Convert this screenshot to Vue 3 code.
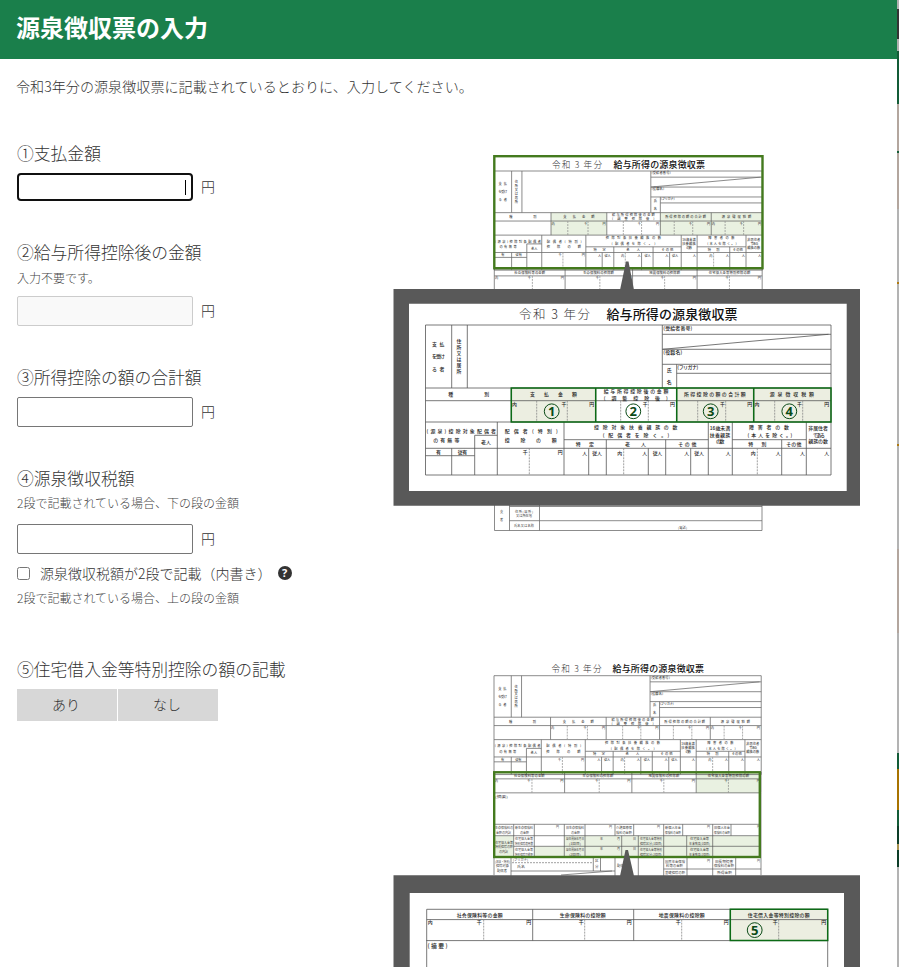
<script setup>
import { ref } from 'vue';

const income = ref('');
const deduction = ref('');
const tax = ref('');
const doubleEntry = ref(false);
const housing = ref('');

// upper half of the slip, solid rules: x1, y1, x2, y2
const slipLines = [
  [0, 0, 405.5, 0],
  [0, 63, 405.5, 63],
  [0, 75.7, 405.5, 75.7],
  [0, 97, 405.5, 97],
  [0, 123.3, 405.5, 123.3],
  [0, 150, 405.5, 150],
  [0, 130.7, 49.2, 130.7],
  [49.2, 110.3, 71.8, 110.3],
  [138.5, 114.7, 282.8, 114.7],
  [306.8, 114.7, 380.8, 114.7],
  [236.8, 9.3, 405.5, 9.3],
  [236.8, 24.3, 405.5, 24.3],
  [236.8, 39.3, 405.5, 39.3],
  [251.2, 48.3, 405.5, 48.3],
  [237, 24.3, 403, 9.3],
  [0, 0, 0, 150],
  [405.5, 0, 405.5, 150],
  [26.2, 0, 26.2, 63],
  [41.8, 0, 41.8, 63],
  [236.8, 0, 236.8, 63],
  [251.2, 39.3, 251.2, 63],
  [85.8, 63, 85.8, 97],
  [170.2, 63, 170.2, 97],
  [251.2, 63, 251.2, 97],
  [328.2, 63, 328.2, 97],
  [26.2, 123.3, 26.2, 150],
  [49.2, 110.3, 49.2, 150],
  [71.8, 97, 71.8, 150],
  [138.5, 97, 138.5, 150],
  [180.8, 114.7, 180.8, 150],
  [240.2, 114.7, 240.2, 150],
  [163.2, 123.3, 163.2, 150],
  [222.8, 123.3, 222.8, 150],
  [265.2, 123.3, 265.2, 150],
  [282.8, 97, 282.8, 150],
  [306.8, 97, 306.8, 150],
  [356.2, 114.7, 356.2, 150],
  [380.8, 97, 380.8, 150],
];

const slipDashes = [
  [111.2, 75.7, 97],
  [141.8, 75.7, 97],
  [195.2, 75.7, 97],
  [222.8, 75.7, 97],
  [272.2, 75.7, 97],
  [300.2, 75.7, 97],
  [349.2, 75.7, 97],
  [377.2, 75.7, 97],
  [103.8, 123.3, 150],
  [198.2, 123.3, 150],
  [331.8, 123.3, 150],
];

// text, x, baseline, width
const slipTexts = [
  ['支払', 6.5, 21, 12.5],
  ['を受け', 6.5, 33.2, 13],
  ['る者', 6.5, 45.5, 12.5],
  ['住', 31, 18, 4.5],
  ['所', 31, 24, 4.5],
  ['又', 31, 30, 4.5],
  ['は', 31, 36, 4.5],
  ['居', 31, 42.2, 4.5],
  ['所', 31, 48.2, 4.5],
  ['種', 22.8, 71.3, 4.5],
  ['別', 58.8, 71.3, 4.5],
  ['支払金額', 104.5, 71.3, 47],
  ['給与所得控除後の金額', 178.2, 68.4, 64.6],
  ['(調整控除後)', 178.2, 74.5, 64],
  ['所得控除の額の合計額', 258.5, 71.3, 61.7],
  ['源泉徴収税額', 344.2, 71.3, 44.3],
  ['内', 86.5, 81, 4.5],
  ['千', 136, 81, 4.5],
  ['円', 163.8, 81, 4.5],
  ['千', 217.2, 81, 4.5],
  ['円', 244.5, 81, 4.5],
  ['千', 294.5, 81, 4.5],
  ['円', 321.8, 81, 4.5],
  ['内', 329, 81, 4.5],
  ['千', 371.5, 81, 4.5],
  ['円', 398.8, 81, 4.5],
  ['(源泉)控除対象配偶者', 1, 108.3, 69.5],
  ['の有無等', 7.8, 116.9, 26],
  ['老人', 55.5, 119, 10],
  ['配偶者(特別)', 79.2, 108.3, 53],
  ['控除の額', 79.2, 116.9, 52],
  ['控除対象扶養親族の数', 168.5, 103.5, 83.5],
  ['(配偶者を除く。)', 177.2, 112.3, 66.6],
  ['特定', 150.2, 121, 18.3],
  ['老人', 199.5, 121, 21],
  ['その他', 252.8, 121, 18],
  ['有', 10.5, 129.3, 4.5],
  ['従有', 32.2, 129.3, 9.5],
  ['千', 97.2, 129, 4.5],
  ['円', 132.2, 129, 4.5],
  ['人', 156.8, 129.5, 4.5],
  ['従人', 166.8, 129.5, 9.5],
  ['内', 191.8, 129.5, 4.5],
  ['人', 216.8, 129.5, 4.5],
  ['従人', 227.2, 129.5, 9.5],
  ['人', 258.8, 129.5, 4.5],
  ['従人', 268.8, 129.5, 9.5],
  ['人', 300.2, 129.5, 4.5],
  ['内', 325.2, 129.5, 4.5],
  ['人', 350.2, 129.5, 4.5],
  ['人', 374.5, 129.5, 4.5],
  ['人', 398.8, 129.5, 4.5],
  ['16歳未満', 284.2, 105.3, 20.5],
  ['扶養親族', 284.2, 111.5, 20.5],
  ['の数', 290.5, 117.7, 8.5],
  ['障害者の数', 323.5, 103.5, 40],
  ['(本人を除く。)', 322, 112.3, 44.8],
  ['特別', 322.8, 121, 18],
  ['その他', 360.8, 121, 15],
  ['非居住者', 382.8, 105.3, 19.5],
  ['である', 387.5, 111.5, 12],
  ['親族の数', 382.8, 117.7, 19.5],
  ['(受給者番号)', 237.8, 4.9, 29],
  ['(役職名)', 237.8, 29.3, 19],
  ['(フリガナ)', 251.8, 44, 21],
  ['氏', 241.2, 46.5, 4.5],
  ['名', 241.2, 58.7, 4.5],
];

// insurance row
const insLines = [
  [0, 0, 401, 0],
  [0, 10.3, 401, 10.3],
  [0, 31.3, 401, 31.3],
  [0, 0, 0, 31.3],
  [106, 0, 106, 31.3],
  [207, 0, 207, 31.3],
  [303.6, 0, 303.6, 31.3],
  [401, 0, 401, 31.3],
];
const insDashes = [57, 158, 255, 352];
const insTexts = [
  ['社会保険料等の金額', 30, 7.4, 46],
  ['生命保険料の控除額', 133, 7.4, 46],
  ['地震保険料の控除額', 232, 7.4, 46],
  ['住宅借入金等特別控除の額', 321, 7.4, 62],
  ['内', 1, 14.9, 4.5],
  ['千', 50, 14.9, 4.5],
  ['円', 99.5, 14.9, 4.5],
  ['千', 152, 14.9, 4.5],
  ['円', 200, 14.9, 4.5],
  ['千', 249, 14.9, 4.5],
  ['円', 297, 14.9, 4.5],
  ['千', 346, 14.9, 4.5],
  ['円', 394.5, 14.9, 4.5],
];

const marks = [
  ['1', 158.7],
  ['2', 240.3],
  ['3', 317.7],
  ['4', 396.3],
];

// lower half of the second slip
const detailLines = [
  [101, 138, 101, 220],
  [368, 138, 368, 220],
  [101, 169.3, 368, 169.3],
  [101, 180.7, 368, 180.7],
  [120.7, 191.3, 368, 191.3],
  [101, 202.5, 368, 202.5],
  [120.7, 169.3, 120.7, 202],
  [141.3, 169.3, 141.3, 202],
  [171.3, 169.3, 171.3, 202],
  [192, 169.3, 192, 202],
  [222, 169.3, 222, 180.7],
  [240.7, 169.3, 240.7, 180.7],
  [270.7, 169.3, 270.7, 202],
  [289.7, 169.3, 289.7, 180.7],
  [319.7, 169.3, 319.7, 202],
  [338, 169.3, 338, 180.7],
  [228.7, 180.7, 228.7, 202],
  [245.3, 180.7, 245.3, 202],
  [293.7, 180.7, 293.7, 202],
  [118, 203, 118, 221],
  [118, 216, 222, 216],
  [168, 220, 219, 216],
  [200.3, 203, 200.3, 216],
  [207.5, 203, 207.5, 216],
  [222, 203, 222, 221],
  [245.3, 203, 245.3, 221],
  [270.7, 203, 270.7, 221],
  [294, 203, 294, 221],
  [319.7, 203, 319.7, 221],
  [342.7, 203, 342.7, 221],
  [270.7, 214, 368, 214],
];
const detailTexts = [
  ['(摘要)', 102, 142.8, 13],
  ['生命保険料の', 102, 174.2, 18],
  ['金額の内訳', 103, 178.7, 15],
  ['新生命保険料', 122, 174.2, 18],
  ['の金額', 127, 178.7, 9],
  ['旧生命保険料', 173, 174.2, 18],
  ['の金額', 178, 178.7, 9],
  ['介護医療保', 223, 174.2, 16],
  ['険料の金額', 223, 178.7, 16],
  ['新個人年金', 272, 174.2, 16],
  ['保険料の金額', 272, 178.7, 16],
  ['旧個人年金', 321, 174.2, 16],
  ['保険料の金額', 321, 178.7, 16],
  ['住宅借入金等', 102, 188.5, 18],
  ['特別控除の額', 102, 193, 18],
  ['の内訳', 106, 197.5, 9],
  ['住宅借入金等', 122, 185.2, 18],
  ['特別控除適用数', 122, 189.5, 18],
  ['住宅借入金等', 122, 196, 18],
  ['特別控除可能額', 122, 200.5, 18],
  ['居住開始年月日', 173, 185.2, 18],
  ['(1回目)', 176, 189.5, 12],
  ['居住開始年月日', 173, 196, 18],
  ['(2回目)', 176, 200.5, 12],
  ['住宅借入金等特別', 247, 185.2, 22],
  ['控除区分(1回目)', 247, 189.5, 22],
  ['住宅借入金等特別', 247, 196, 22],
  ['控除区分(2回目)', 247, 200.5, 22],
  ['住宅借入金等', 297, 185.2, 19],
  ['年末残高(1回目)', 296, 189.5, 21],
  ['住宅借入金等', 297, 196, 19],
  ['年末残高(2回目)', 296, 200.5, 21],
  ['(源泉・特別)', 102, 208, 15],
  ['控除対象', 103, 212.3, 13],
  ['配偶者', 104, 216.6, 10],
  ['(フリガナ)', 120, 206.2, 15],
  ['氏名', 124, 213, 8],
  ['区', 202, 207, 3.5],
  ['分', 202, 212.5, 3.5],
  ['配偶者の', 224, 212, 14],
  ['国民年金保険', 272, 207.5, 20],
  ['料等の金額', 273, 212, 17],
  ['旧長期損害', 322, 207.5, 18],
  ['保険料の金額', 321, 212, 20],
  ['基礎控除の額', 272, 219, 20],
  ['所得金額', 324, 219, 15],
  ['円', 163, 173, 3],
  ['円', 216, 173, 3],
  ['円', 264, 173, 3],
  ['円', 314, 173, 3],
  ['円', 364, 173, 3],
  ['年', 207, 184.5, 3],
  ['月', 224, 184.5, 3],
  ['日', 240, 184.5, 3],
  ['年', 207, 195, 3],
  ['月', 224, 195, 3],
  ['日', 240, 195, 3],
  ['円', 314, 207, 3],
  ['円', 364, 207, 3],
];
</script>

<template>
  <div class="page">
    <div class="sheet">
      <header class="header">
        <h1 class="header__title">源泉徴収票の入力</h1>
      </header>
      <p class="intro">令和3年分の源泉徴収票に記載されているとおりに、入力してください。</p>

      <main class="main">
        <form class="form" @submit.prevent>
          <section class="field">
            <label class="field__label">①支払金額</label>
            <div class="field__row">
              <div class="field__focus">
                <input v-model="income" class="field__input field__input--focus" />
                <span v-if="!income" class="field__caret"></span>
              </div>
              <span class="field__unit">円</span>
            </div>
          </section>

          <section class="field">
            <label class="field__label">②給与所得控除後の金額</label>
            <p class="field__note field__note--top">入力不要です。</p>
            <div class="field__row">
              <input class="field__input" disabled />
              <span class="field__unit">円</span>
            </div>
          </section>

          <section class="field">
            <label class="field__label">③所得控除の額の合計額</label>
            <div class="field__row">
              <input v-model="deduction" class="field__input" />
              <span class="field__unit">円</span>
            </div>
          </section>

          <section class="field field--tax">
            <label class="field__label">④源泉徴収税額</label>
            <p class="field__note field__note--tax">2段で記載されている場合、下の段の金額</p>
            <div class="field__row">
              <input v-model="tax" class="field__input" />
              <span class="field__unit">円</span>
            </div>
            <label class="check">
              <input v-model="doubleEntry" type="checkbox" class="check__box" />
              <span class="check__text">源泉徴収税額が2段で記載（内書き）</span>
              <span class="check__help">?</span>
            </label>
            <p class="field__note">2段で記載されている場合、上の段の金額</p>
          </section>

          <section class="field">
            <label class="field__label">⑤住宅借入金等特別控除の額の記載</label>
            <div class="choice">
              <button class="choice__btn" @click="housing = 'yes'">あり</button>
              <button class="choice__btn" @click="housing = 'no'">なし</button>
            </div>
          </section>
        </form>

        <div class="figures">
          <svg class="figure" width="468" height="382" viewBox="0 0 468 382">
            <defs>
              <g id="slip">
                <path
                  v-for="(l, i) in slipLines"
                  :key="'l' + i"
                  :d="`M${l[0]} ${l[1]}L${l[2]} ${l[3]}`"
                  class="rule"
                />
                <path
                  v-for="(d, i) in slipDashes"
                  :key="'d' + i"
                  :d="`M${d[0]} ${d[1]}V${d[2]}`"
                  class="rule rule--dash"
                />
                <text
                  v-for="(t, i) in slipTexts"
                  :key="'t' + i"
                  :x="t[1]"
                  :y="t[2]"
                  :textLength="t[3]"
                  class="tiny"
                >{{ t[0] }}</text>
              </g>
              <g id="insurance">
                <path
                  v-for="(l, i) in insLines"
                  :key="'l' + i"
                  :d="`M${l[0]} ${l[1]}L${l[2]} ${l[3]}`"
                  class="rule"
                />
                <path
                  v-for="x in insDashes"
                  :key="x"
                  :d="`M${x} 10.3V31.3`"
                  class="rule rule--dash"
                />
                <text
                  v-for="(t, i) in insTexts"
                  :key="'t' + i"
                  :x="t[1]"
                  :y="t[2]"
                  :textLength="t[3]"
                  class="tiny"
                >{{ t[0] }}</text>
              </g>
            </defs>

            <path class="tint" d="M158 59.6h55.8v22.5H158zM267 59.6h102v22.5H267z" />
            <text x="159" y="14.5" textLength="50" class="year year--small">令和 3 年分</text>
            <text x="220.5" y="14.6" textLength="91.5" class="name name--small">給与所得の源泉徴収票</text>
            <use href="#slip" transform="translate(101.3 18) scale(.661)" class="small" />
            <use href="#insurance" transform="translate(101.3 116) scale(.668)" class="small" />
            <rect x="101.3" y="3.2" width="268.2" height="112" class="outline" />
            <path
              class="small rule"
              d="M101.5 350V377.5H369V350M116.5 352V377.5M146.5 352V377.5M116.5 353.5H369M116.5 367.7H369"
            />
            <text x="107" y="360" class="micro">支</text>
            <text x="107" y="368" class="micro">者</text>
            <text x="122" y="359.5" textLength="18" class="micro">住所(居所)</text>
            <text x="123" y="364" textLength="16" class="micro">又は所在地</text>
            <text x="121" y="373.5" textLength="20" class="micro">氏名又は名称</text>
            <text x="285" y="375.5" textLength="9" class="micro">(電話)</text>

            <path class="frame" d="M233 108.5h2.5L241 137h-14zM.5 136H467v216.7H.5z" />
            <path class="paper" d="M16 150.7h437.7V338H16z" />
            <path class="tint2" d="M118.3 235h84.4v34h-84.4zM283.7 235H438v34H283.7z" />
            <text x="126" y="166" textLength="71" class="year">令和 3 年分</text>
            <text x="213.5" y="166" textLength="131" class="name">給与所得の源泉徴収票</text>
            <use href="#slip" transform="translate(32.5 172)" />
            <path class="hot" d="M118.3 235H438v34H118.3zM202.7 235v34M283.7 235v34M360.7 235v34" />
            <g v-for="m in marks" :key="m[0]">
              <circle :cx="m[1]" cy="258.3" r="7.4" class="mark" />
              <text :x="m[1]" y="263" class="mark__num">{{ m[0] }}</text>
            </g>
          </svg>

          <svg class="figure figure--second" width="468" height="312" viewBox="0 0 468 312">
            <path
              class="tint"
              d="M303.5 117H366v21h-62.5zM102 180.7h18.7V202H102zM171.3 180.7H366V202H171.3zM141.3 191.3h30V202h-30z"
            />
            <text x="158.5" y="16.5" textLength="50" class="year year--small">令和 3 年分</text>
            <text x="219.500" y="16.5" textLength="91.5" class="name name--small">給与所得の源泉徴収票</text>
            <use href="#slip" transform="translate(101 20.7) scale(.659)" class="small" />
            <use href="#insurance" transform="translate(101 117) scale(.666)" class="small" />
            <path
              v-for="(l, i) in detailLines"
              :key="'l' + i"
              :d="`M${l[0]} ${l[1]}L${l[2]} ${l[3]}`"
              class="small rule"
            />
            <path d="M119 207.7H200" class="rule rule--dash" />
            <text
              v-for="(t, i) in detailTexts"
              :key="'t' + i"
              :x="t[1]"
              :y="t[2]"
              :textLength="t[3]"
              lengthAdjust="spacingAndGlyphs"
              class="micro"
            >{{ t[0] }}</text>
            <rect x="101.2" y="117.3" width="265.6" height="84.7" class="outline" />

            <path class="frame" d="M232.5 195h2.5L241 221h-14zM.5 220.300H467V312H.5z" />
            <path class="paper" d="M16.7 238H451v74H16.7z" />
            <path class="tint2" d="M337.3 254.3h97.4v31.3h-97.4z" />
            <use href="#insurance" transform="translate(33.7 254.3)" />
            <path class="rule" d="M33.7 285V312M434.7 285V312" />
            <path class="hot" d="M337.3 254.3h97.4v31.3h-97.4z" />
            <text x="34.5" y="292.5" textLength="20" class="tiny tiny--note">(摘要)</text>
            <circle cx="361.7" cy="275.1" r="7.4" class="mark" />
            <text x="361.7" y="279.8" class="mark__num">5</text>
          </svg>
        </div>
      </main>
    </div>
    <div class="edge"></div>
  </div>
</template>

<style>
body {
  background: #ffffff;
  overflow: hidden;
}
</style>

<style scoped>
.page {
  display: flex;
  height: 967px;
  overflow: hidden;
  color: #333333;
  font-family: 'Noto Sans CJK JP', sans-serif;
  font-weight: 300;
}

.sheet {
  flex: 1;
  min-width: 0;
}

.edge {
  width: 2px;
  background: linear-gradient(
    #b0b0b0 0 9px,
    #343434 9px 39px,
    #b0b0b0 39px 51px,
    #135c37 51px 104px,
    #b3a69e 104px 151px,
    #135c37 151px 153px,
    #b3a69e 153px 209px,
    #b3b3b3 209px 282px,
    #b07a10 282px 284px,
    #b3b3b3 284px 444px,
    #b07a10 444px 446px,
    #b3b3b3 446px 549px,
    #b3a69e 549px 633px,
    #b3b3b3 633px 753px,
    #135c37 753px 769px,
    #a87300 769px 810px,
    #135c37 810px 826px,
    #0d3d28 826px 844px,
    #a89250 844px 850px,
    #0d3d28 850px 867px,
    #b3b3b3 867px
  );
}

.header {
  height: 59px;
  padding: 0 16px;
  background: #1a7f4b;
}

.header__title {
  margin: 0;
  font-size: 24px;
  font-weight: 700;
  line-height: 53px;
  color: #ffffff;
}

.intro {
  margin: 0;
  padding: 15px 16px 1px;
  font-size: 14.1px;
  line-height: 24px;
}

.main {
  display: flex;
  padding-top: 42px;
}

.form {
  flex: none;
  width: 376px;
  padding-left: 17px;
}

.field {
  margin-bottom: 39px;
}

.field--tax {
  margin-bottom: 49px;
}

.field__label {
  display: block;
  margin-bottom: 8px;
  font-size: 16.8px;
  line-height: 24px;
}

.field__note {
  margin: 0;
  font-size: 12px;
  line-height: 20px;
  color: #444444;
}

.field__note--top {
  margin: -4px 0 8px;
}

.field__note--tax {
  margin: -5px 0 11px;
}

.field__row {
  display: flex;
  align-items: center;
  gap: 8px;
}

.field__input {
  box-sizing: border-box;
  display: block;
  width: 176px;
  height: 30px;
  padding: 0 6px;
  border: 1px solid #767676;
  border-radius: 2px;
  background: #ffffff;
  font: inherit;
  text-align: right;
  outline: none;
}

.field__input:disabled {
  border-color: #cccccc;
  background: #f9f9f9;
}

.field__input--focus {
  height: 28px;
  border: 2px solid #101010;
  border-radius: 4px;
}

.field__focus {
  position: relative;
}

.field__caret {
  position: absolute;
  top: 7px;
  right: 7px;
  width: 1px;
  height: 15px;
  background: #000000;
}

.field__unit {
  padding-bottom: 2px;
  font-size: 14px;
  line-height: 20px;
}

.check {
  display: flex;
  align-items: center;
  height: 20px;
  margin: 9px 0 5px;
  font-size: 14px;
}

.check__box {
  width: 13px;
  height: 13px;
  margin: 0 10px 0 0;
}

.check__text {
  padding-bottom: 1px;
}

.check__help {
  width: 14px;
  height: 14px;
  margin-left: 6px;
  border-radius: 50%;
  background: #333333;
  color: #ffffff;
  font: 700 11px/14px 'Open Sans', sans-serif;
  text-align: center;
}

.choice {
  display: flex;
  gap: 1px;
}

.choice__btn {
  width: 100px;
  height: 32px;
  padding: 0 2px 2px 0;
  border: 0;
  background: #d7d7d7;
  color: #333333;
  font: inherit;
  font-size: 14px;
}

.figures {
  padding-top: 12px;
}

.figure {
  display: block;
}

.figure--second {
  margin-top: 120px;
}

.rule {
  fill: none;
  stroke: #555555;
  stroke-width: 0.8px;
  vector-effect: non-scaling-stroke;
}

.rule--dash {
  stroke: #888888;
  stroke-dasharray: 2 1;
}

.tiny {
  font-size: 4.9px;
  font-weight: 500;
  fill: #222222;
}

.tiny--note {
  font-size: 5.8px;
}

.micro {
  font-size: 3.2px;
  font-weight: 400;
  fill: #444444;
}

.small {
  opacity: 0.85;
}

.year {
  font-size: 12.5px;
  font-weight: 300;
  fill: #333333;
}

.year--small {
  font-size: 8.6px;
}

.name {
  font-size: 13px;
  font-weight: 500;
  fill: #111111;
}

.name--small {
  font-size: 9px;
}

.outline {
  fill: none;
  stroke: #447a1e;
  stroke-width: 2.4px;
}

.frame {
  fill: #595959;
}

.paper {
  fill: #ffffff;
}

.tint {
  fill: #e9f1e1;
}

.tint2 {
  fill: #eceee1;
}

.hot {
  fill: none;
  stroke: #0c6b16;
  stroke-width: 1.5px;
}

.mark {
  fill: none;
  stroke: #0a4a16;
  stroke-width: 1px;
}

.mark__num {
  font-family: 'Noto Sans', sans-serif;
  font-size: 13px;
  font-weight: 700;
  text-anchor: middle;
  fill: #0a4a16;
}
</style>
